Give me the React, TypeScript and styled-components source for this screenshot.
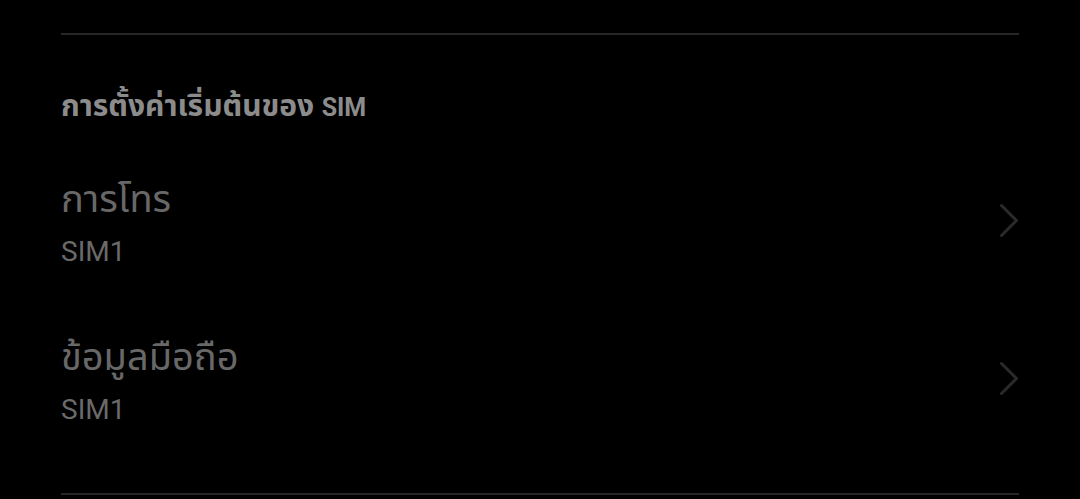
import React from "react";
import styled, { createGlobalStyle } from "styled-components";

const Global = createGlobalStyle`
  html, body { margin: 0; padding: 0; background: #000; }
  body { font-family: Roboto, "Noto Sans Thai", sans-serif; }
`;

const Page = styled.div`
  width: 1080px;
  height: 499px;
  background: #000;
  padding: 33px 61px 0 61px;
  box-sizing: border-box;
  display: flex;
  flex-direction: column;
  overflow: hidden;
`;

const Divider = styled.div<{ $top?: number }>`
  flex: none;
  height: 2px;
  background: #262626;
  width: 100%;
  margin-top: ${(p) => p.$top ?? 0}px;
`;

const SectionHeader = styled.div`
  margin-top: 54px;
  font-family: Roboto, "Noto Sans Thai", sans-serif;
  font-size: 30px;
  font-weight: 700;
  color: #8c8c8c;
  line-height: 34px;
  height: 34px;
  white-space: nowrap;
`;

const Latin = styled.span`
  font-size: 25px;
`;

const Row = styled.div`
  display: flex;
  align-items: center;
  justify-content: space-between;
  padding: 53px 0 12px 0;
`;

const Texts = styled.div`
  display: flex;
  flex-direction: column;
`;

const Title = styled.div`
  font-size: 38px;
  color: #686868;
  line-height: 46px;
  white-space: nowrap;
`;

const Sub = styled.div`
  font-size: 28px;
  color: #6a6a6a;
  line-height: 34px;
  margin-top: 13px;
`;

const ChevronBox = styled.div`
  display: flex;
  margin-bottom: 4px;
`;

const Chevron = () => (
  <ChevronBox>
    <svg width="20" height="35" viewBox="0 0 20 35">
      <path d="M2.5 2.5 L17.5 17.5 L2.5 32.5" fill="none" stroke="#2a2a2a" strokeWidth="3" strokeLinecap="round" strokeLinejoin="round" />
    </svg>
  </ChevronBox>
);

const items = [
  { title: "การโทร", sub: "SIM1" },
  { title: "ข้อมูลมือถือ", sub: "SIM1" },
];

export default function App() {
  return (
    <>
      <Global />
      <Page>
        <Divider />
        <SectionHeader>
          การตั้งค่าเริ่มต้นของ <Latin>SIM</Latin>
        </SectionHeader>
        {items.map((it) => (
          <Row key={it.title}>
            <Texts>
              <Title>{it.title}</Title>
              <Sub>{it.sub}</Sub>
            </Texts>
            <Chevron />
          </Row>
        ))}
        <Divider $top={54} />
      </Page>
    </>
  );
}
